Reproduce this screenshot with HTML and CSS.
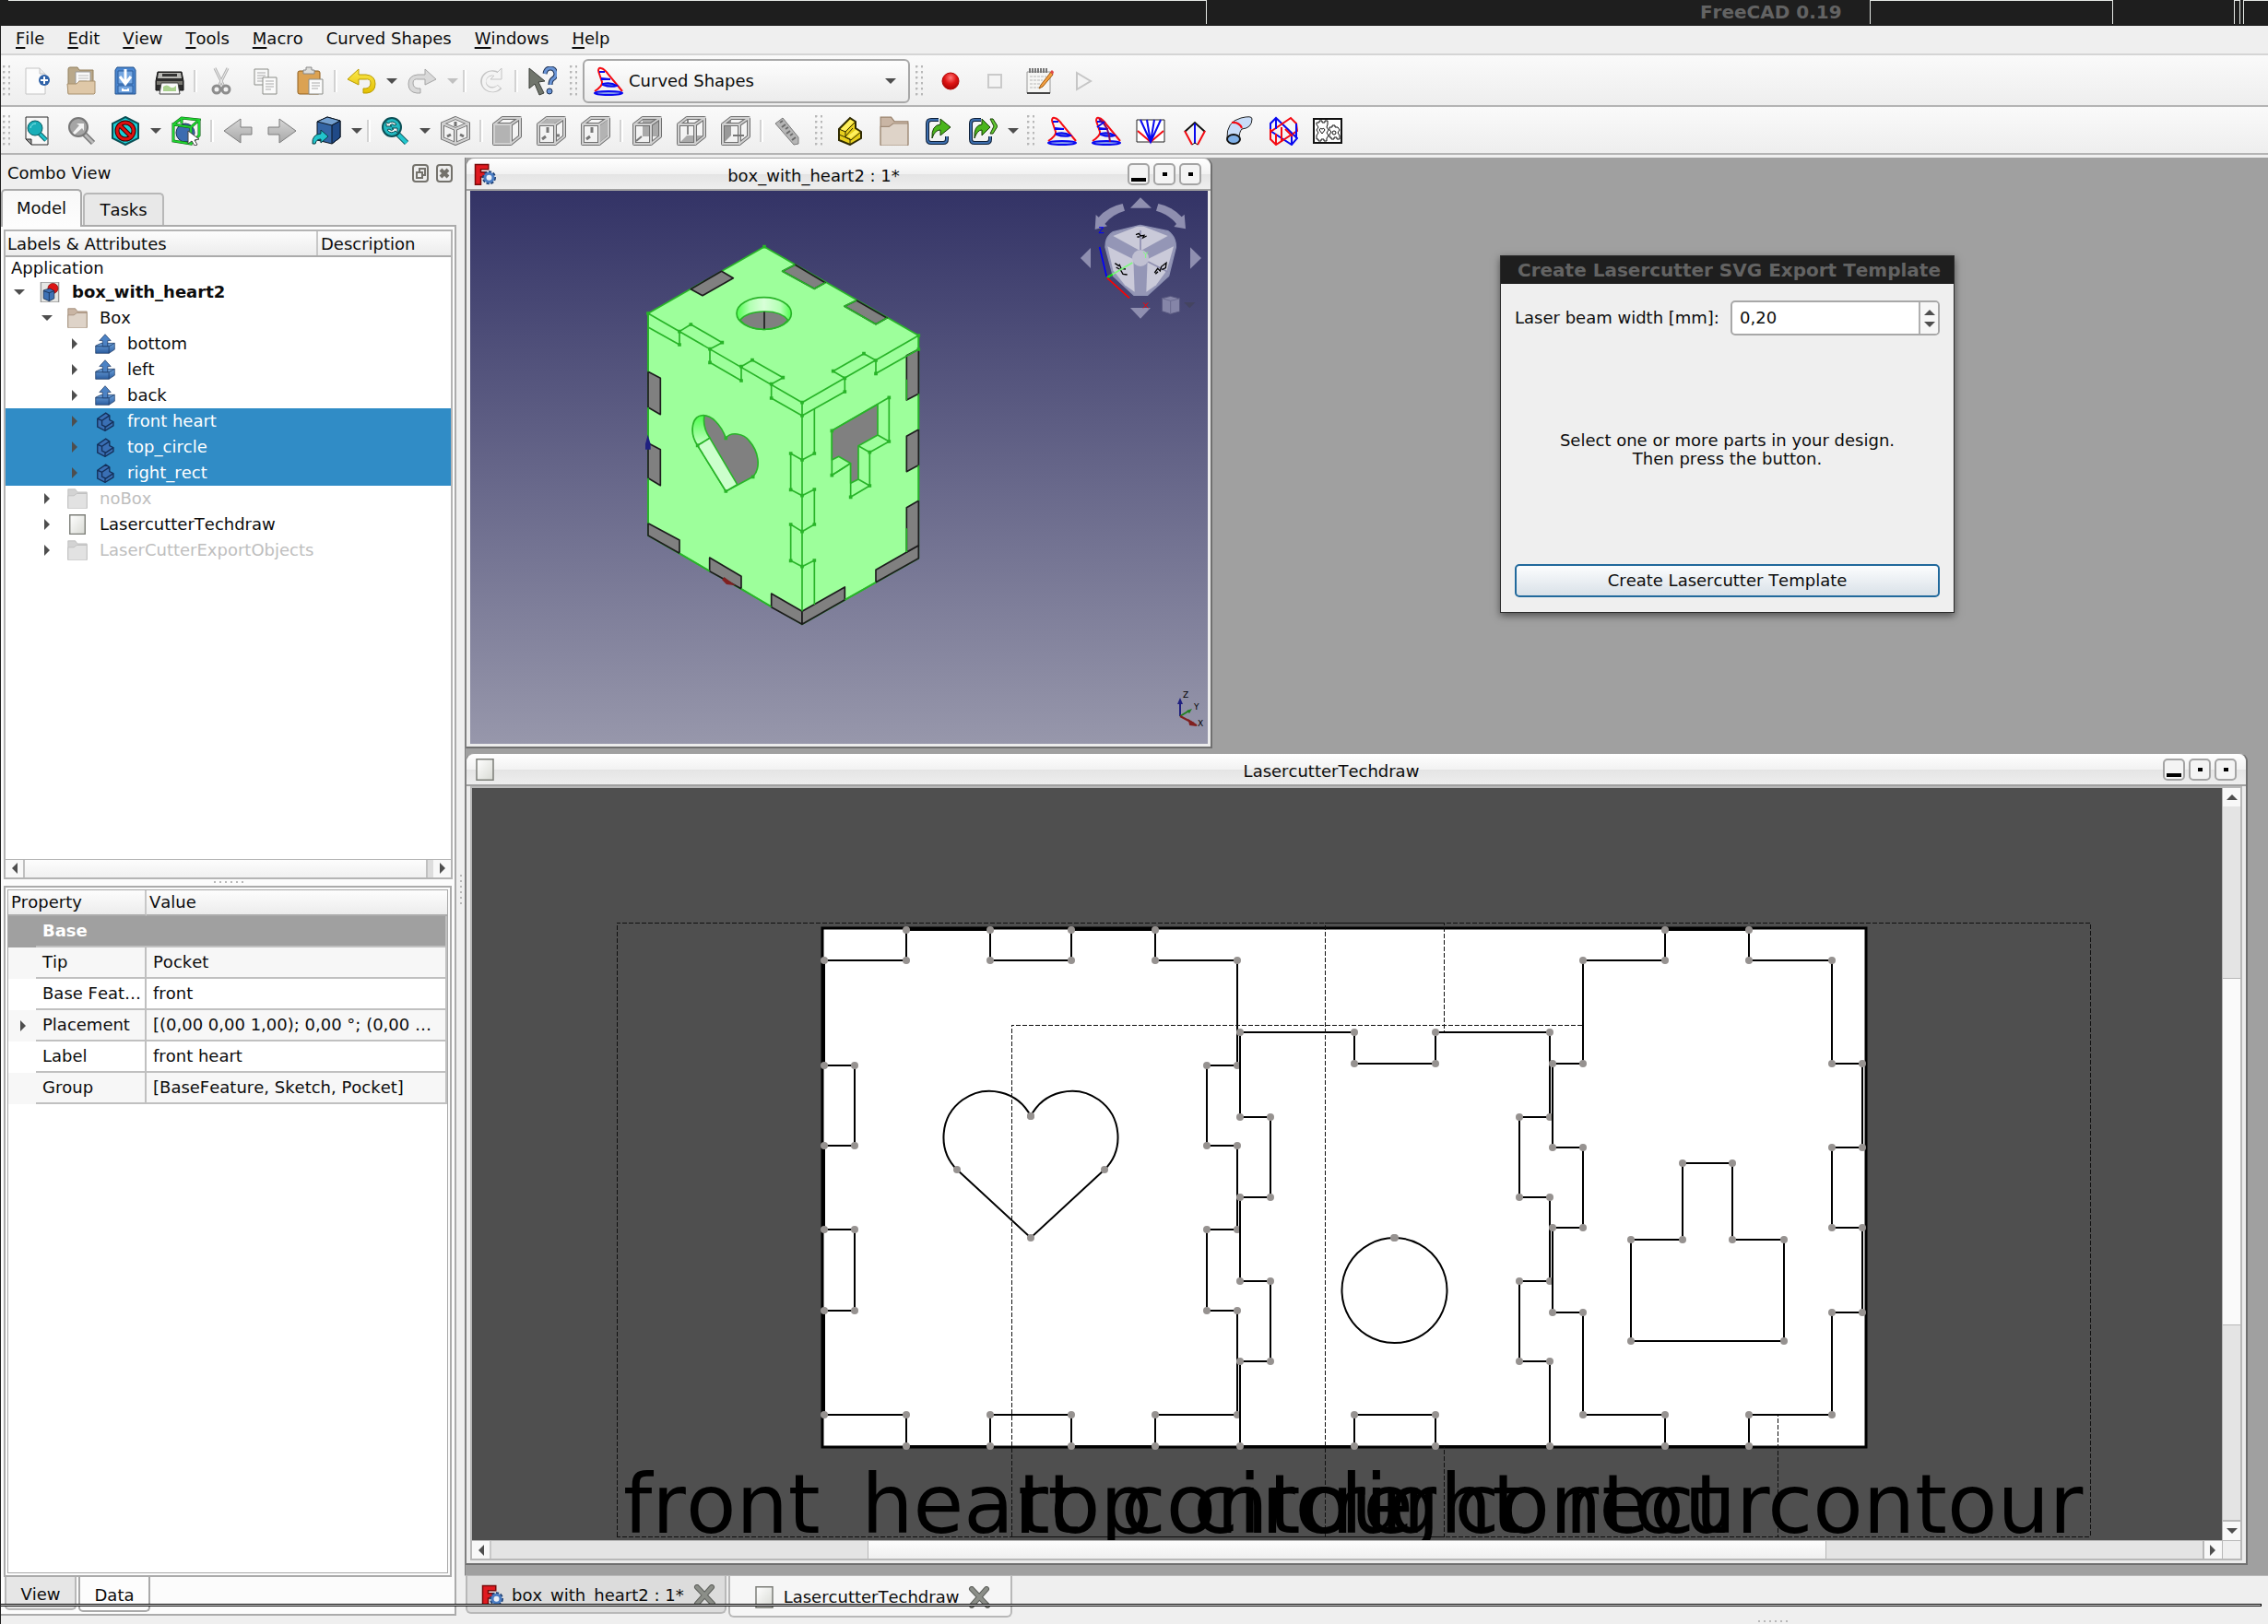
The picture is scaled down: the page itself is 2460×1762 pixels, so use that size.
FILE: index.html
```html
<!DOCTYPE html>
<html lang="en">
<head>
<meta charset="utf-8">
<title>FreeCAD 0.19</title>
<link rel="stylesheet" href="styles.css">
</head>
<body class="app">

<svg class="sprites" aria-hidden="true">
  <defs>
    <linearGradient id="paper" x1="0" y1="0" x2="1" y2="1"><stop offset="0" stop-color="#fff"/><stop offset="1" stop-color="#d8dad4"/></linearGradient>
    <linearGradient id="gold" x1="0" y1="0" x2="0" y2="1"><stop offset="0" stop-color="#fce94f"/><stop offset="1" stop-color="#e3c000"/></linearGradient>
    <linearGradient id="steel" x1="0" y1="0" x2="0" y2="1"><stop offset="0" stop-color="#6da2dc"/><stop offset="1" stop-color="#2b5c9e"/></linearGradient>
    <linearGradient id="sky" x1="0" y1="0" x2="0" y2="1"><stop offset="0" stop-color="#333366"/><stop offset="1" stop-color="#9797ab"/></linearGradient>
    <linearGradient id="silver" x1="0" y1="0" x2="0" y2="1"><stop offset="0" stop-color="#d6d6d6"/><stop offset="1" stop-color="#a8a8a8"/></linearGradient>
    <linearGradient id="bore"><stop offset="0" stop-color="#4dff4d"/><stop offset=".25" stop-color="#b4ffb4"/><stop offset=".5" stop-color="#d8ffd8"/><stop offset=".8" stop-color="#b4ffb4"/><stop offset="1" stop-color="#4dff4d"/></linearGradient>
    <linearGradient id="lobe" x1="0" y1="0" x2="0" y2="1"><stop offset="0" stop-color="#4dff4d"/><stop offset="1" stop-color="#c8ffc8"/></linearGradient>
    <radialGradient id="ruby" cx=".5" cy=".3" r=".7"><stop offset="0" stop-color="#ff7a7a"/><stop offset=".5" stop-color="#e01515"/><stop offset="1" stop-color="#a80000"/></radialGradient>
    <marker id="node" markerUnits="userSpaceOnUse" markerWidth="10" markerHeight="10" refX="5" refY="5"><circle cx="5" cy="5" r="4" fill="#969290"/></marker>
  </defs>

  <symbol id="i-new" viewBox="0 0 32 32"><path d="M4 2h15l6 6v22H4z" fill="#fcfcfc" stroke="#c4c4c4"/><path d="M19 2v6h6" fill="#eee" stroke="#c4c4c4"/><circle cx="24" cy="15" r="6" fill="#2f62a8"/><path d="M24 11v8M20 15h8" stroke="#fff" stroke-width="2"/></symbol>
  <symbol id="i-open" viewBox="0 0 32 32"><path d="M2 29V3q0-2 2-2h8l2 3h15v22H2" fill="#b9a88a" stroke="#94805f"/><path d="M10 6h16v16H10z" fill="#fafafa" stroke="#999"/><path d="M13 10h11M13 13h11M13 16h9" stroke="#bbb"/><path d="M2 30l-1-11h10l3-3h17v13l-1 1z" fill="#dfc8a8" stroke="#a8916e"/></symbol>
  <symbol id="i-save" viewBox="0 0 32 32"><path d="M7 1h18l2 3v26H5V4z" fill="#4a86d0" stroke="#20508c"/><path d="M8 5h16v14H8zM8 21h16v8H8z" fill="#73a5e0" stroke="#2a5c9c"/><path d="M16 3v14M10 11l6 8 6-8" fill="none" stroke="#fff" stroke-width="3"/><path d="M13 24v2h6v-2" fill="none" stroke="#fff" stroke-width="2"/></symbol>
  <symbol id="i-print" viewBox="0 0 32 32"><path d="M3 6h26l2 10v10H1V16z" fill="#2c2c2c" stroke="#111"/><path d="M4 7h24l1 6H3z" fill="#b9b9b5"/><path d="M8 8h16v3H8z" fill="#333"/><path d="M2 16h28v4H2z" fill="#77766f"/><path d="M7 18h18l2 12H5z" fill="#fafafa" stroke="#444"/><path d="M9 22q4-3 7 0t7-1v6H9z" fill="#a9d18e"/></symbol>
  <symbol id="i-cut" viewBox="0 0 32 32"><path d="M9 2l10 20M23 2L13 22" stroke="#b2b2b2" stroke-width="3"/><path d="M9 2l10 20M23 2L13 22" stroke="#f2f2f2"/><circle cx="11" cy="25" r="4" fill="none" stroke="#8d8d8d" stroke-width="3"/><circle cx="21" cy="25" r="4" fill="none" stroke="#8d8d8d" stroke-width="3"/></symbol>
  <symbol id="i-copy" viewBox="0 0 32 32"><path d="M4 3h15v17H4z" fill="#f8f8f8" stroke="#8a8c87"/><path d="M7 7h9M7 10h9M7 13h9M7 16h6" stroke="#aaa"/><path d="M13 12h15v18H13z" fill="#fafafa" stroke="#8a8c87"/><path d="M16 16h9M16 19h9M16 22h9M16 25h6" stroke="#aaa"/></symbol>
  <symbol id="i-paste" viewBox="0 0 32 32"><rect x="3" y="5" width="24" height="25" rx="2" fill="#dba253" stroke="#8f5f1f"/><path d="M9 8V4h3V1h6v3h3v4z" fill="#dededb" stroke="#888"/><path d="M15 14h15v16H15z" fill="#fbfbfb" stroke="#8a8c87"/><path d="M18 18h9M18 21h9M18 24h7" stroke="#aaa"/></symbol>
  <symbol id="i-undo" viewBox="0 0 32 32"><path d="M1 14L13 3v6h8q10 1 10 10t-9 10h-4v-5h3q5-1 5-6t-6-4h-7v6z" fill="url(#gold)" stroke="#b99b00"/></symbol>
  <symbol id="i-redo" viewBox="0 0 32 32"><path d="M31 14L19 3v6h-8Q1 10 1 19t9 10h4v-5h-3q-5-1-5-6t6-4h7v6z" fill="#d9d9d9" stroke="#a5a5a5"/></symbol>
  <symbol id="i-refresh" viewBox="0 0 32 32"><path d="M26 22a10 9 0 1 1-2-13" fill="none" stroke="#c4c4c4" stroke-width="6"/><path d="M28 2v12H16z" fill="#f4f4f4" stroke="#c4c4c4"/><path d="M25 22a9 9 0 1 1-1-12" fill="none" stroke="#f4f4f4" stroke-width="4"/></symbol>
  <symbol id="i-help" viewBox="0 0 32 32"><path d="M2 2l17 14-7 1 6 12-5 2-5-12-6 5z" fill="#70756c" stroke="#3c403a"/><path d="M19 8q1-6 6-6t6 6q0 4-4 6-2 2-2 6" fill="none" stroke="#1b2f52" stroke-width="5"/><path d="M19 8q1-6 6-6t6 6q0 4-4 6-2 2-2 6" fill="none" stroke="#6a95d6" stroke-width="3"/><circle cx="24" cy="27" r="3" fill="#6a95d6" stroke="#1b2f52"/></symbol>
  <symbol id="i-record" viewBox="0 0 32 32"><circle cx="16" cy="16" r="9" fill="url(#ruby)" stroke="#b00000"/></symbol>
  <symbol id="i-stop" viewBox="0 0 32 32"><path d="M9 9h14v14H9z" fill="#f4f4f4" stroke="#cacaca" stroke-width="2"/></symbol>
  <symbol id="i-macro" viewBox="0 0 32 32"><path d="M3 6h25v23H3z" fill="#f6f6f4" stroke="#999"/><path d="M3 28h25v2H3z" fill="#444"/><path d="M6 2v5M9 2v5M12 2v5M15 2v5M18 2v5M21 2v5M24 2v5" stroke="#777" stroke-width="2"/><path d="M6 11h18M6 15h14M6 19h12M6 23h10" stroke="#b8b8b8" stroke-dasharray="3 1"/><path d="M29 6L18 20l-2 4 4-2L31 9z" fill="#f5a040" stroke="#9b5a12"/><path d="M28 6l3 3 1-3-2-2z" fill="#e04848"/></symbol>
  <symbol id="i-play" viewBox="0 0 32 32"><path d="M9 7l15 9-15 9z" fill="#f4f4f4" stroke="#c6c6c6" stroke-width="2"/></symbol>

  <symbol id="i-fit" viewBox="0 0 32 32"><path d="M4 1h24v30H10l-6-6z" fill="#f8f8f8" stroke="#2a2a2a"/><path d="M4 25h6v6z" fill="#999" stroke="#2a2a2a"/><path d="M18 18l8 8" stroke="#0a5a60" stroke-width="5"/><path d="M18 18l8 8" stroke="#1fc3cc" stroke-width="3"/><circle cx="14" cy="13" r="8" fill="#18aeb8" stroke="#0a5a60"/><path d="M9 13q1-5 6-5" fill="none" stroke="#8de8ec"/></symbol>
  <symbol id="i-zoomsel" viewBox="0 0 32 32"><path d="M19 19l10 10" stroke="#777" stroke-width="6"/><path d="M19 19l10 10" stroke="#bbb" stroke-width="3"/><circle cx="13" cy="12" r="10" fill="#a5a5a5" stroke="#777" stroke-width="2"/><path d="M7 18l7-8-3-2h8v8l-2-3-8 7z" fill="#f3f3f3"/></symbol>
  <symbol id="i-style" viewBox="0 0 32 32"><path d="M16 1l14 7v16l-14 7-14-7V8z" fill="#19cfd6" stroke="#0a4f55" stroke-width="2"/><circle cx="16" cy="16" r="9" fill="none" stroke="#3a0000" stroke-width="5"/><path d="M10 10l12 12" stroke="#3a0000" stroke-width="5"/><circle cx="16" cy="16" r="9" fill="none" stroke="#dd1111" stroke-width="3"/><path d="M10 10l12 12" stroke="#dd1111" stroke-width="3"/></symbol>
  <symbol id="i-selbox" viewBox="0 0 32 32"><circle cx="15" cy="18" r="10" fill="#3d6cb0" stroke="#162f55"/><path d="M2 9l19 3v18L2 27zM2 9l9-7 19 2-9 8M30 4v17l-9 9M11 2v6" fill="none" stroke="#0a5c10" stroke-width="3"/><path d="M2 9l19 3v18L2 27zM2 9l9-7 19 2-9 8M30 4v17l-9 9M11 2v6" fill="none" stroke="#1fd330" stroke-width="2"/><path d="M18 16l12 9-5 1 3 5-3 1-3-5-4 3z" fill="#fff" stroke="#444"/></symbol>
  <symbol id="i-left" viewBox="0 0 32 32"><path d="M1 16L19 3v9h12v8H19v9z" fill="url(#silver)" stroke="#7d7d7d"/></symbol>
  <symbol id="i-right" viewBox="0 0 32 32"><path d="M31 16L13 3v9H1v8h12v9z" fill="url(#silver)" stroke="#7d7d7d"/></symbol>
  <symbol id="i-link" viewBox="0 0 32 32"><path d="M6 6l11-5 14 4v18l-9 7-16-4z" fill="#3465a4" stroke="#0b1521"/><path d="M6 6l11-5 14 4-9 5z" fill="#729fcf" stroke="#0b1521"/><path d="M22 10l9-5v18l-9 7z" fill="#204a87" stroke="#0b1521"/><path d="M1 30q-1-10 9-11v-4l8 7-8 7v-4q-5 0-6 5z" fill="#22c5cc" stroke="#083c40"/></symbol>
  <symbol id="i-zoom" viewBox="0 0 32 32"><path d="M19 19l10 10" stroke="#0a4f55" stroke-width="6"/><path d="M19 19l10 10" stroke="#22c5cc" stroke-width="4"/><circle cx="13" cy="12" r="10" fill="#22b8c0" stroke="#0a4f55" stroke-width="2"/><path d="M7 11V6l2 2q5-4 9 1l-2 1q-3-3-5 0l2 1zM19 13v5l-2-2q-5 4-9-1l2-1q3 3 5 0l-2-1z" fill="#f4f4f4" stroke="#0a4f55"/></symbol>
  <symbol id="i-iso" viewBox="0 0 32 32"><path d="M16 2l14 6v16l-14 6-14-6V8zM16 14v16M16 14L2 8M16 14l14-6" fill="none" stroke="#737373" stroke-width="4"/><path d="M16 2l14 6v16l-14 6-14-6V8zM16 14v16M16 14L2 8M16 14l14-6" fill="none" stroke="#d2d2d2" stroke-width="2"/><path d="M16 6v5M7 22l4-2M25 22l-4-2" stroke="#737373" stroke-width="3"/></symbol>
  <symbol id="wire" viewBox="0 0 32 32"><path d="M2 9h18v21H2zM2 9l9-7h19l-10 7M30 2v20l-10 8" fill="none" stroke="#707070" stroke-width="4" stroke-linejoin="round"/><path d="M2 9h18v21H2zM2 9l9-7h19l-10 7M30 2v20l-10 8" fill="none" stroke="#d0d0d0" stroke-width="2"/></symbol>
  <symbol id="ticks" viewBox="0 0 32 32"><path d="M12 12v6M6 25l4-3M18 21h7" stroke="#777" stroke-width="3"/></symbol>
  <symbol id="i-front" viewBox="0 0 32 32"><path d="M2 9h18v21H2z" fill="#b3b3b3"/><use href="#wire"/><path d="M3 10h16v19H3z" fill="#b3b3b3"/></symbol>
  <symbol id="i-top" viewBox="0 0 32 32"><use href="#ticks"/><use href="#wire"/><path d="M4 8l8-5h15l-8 5z" fill="#b3b3b3"/></symbol>
  <symbol id="i-rightv" viewBox="0 0 32 32"><use href="#ticks"/><use href="#wire"/><path d="M21 10l8-6v17l-8 7z" fill="#b3b3b3"/></symbol>
  <symbol id="i-rear" viewBox="0 0 32 32"><path d="M11 3h19v19H11z" fill="#aaa"/><use href="#wire"/><path d="M4 27l6-5" stroke="#777" stroke-width="2"/></symbol>
  <symbol id="i-bottom" viewBox="0 0 32 32"><path d="M2 30l9-9h19l-10 9z" fill="#aaa"/><path d="M12 4v16" stroke="#888" stroke-width="2"/><use href="#wire"/></symbol>
  <symbol id="i-leftv" viewBox="0 0 32 32"><path d="M2 9l9-7v19l-9 9z" fill="#999"/><use href="#wire"/><path d="M13 21h12" stroke="#777" stroke-width="2"/></symbol>
  <symbol id="i-ruler" viewBox="0 0 32 32"><path d="M3 8l8-6 17 21v7l-5 1z" fill="#b5b5b5" stroke="#7a7a7a"/><path d="M11 5l-3 2M14 9l-4 3M17 12l-3 2M19 16l-4 3M22 19l-3 2M25 23l-4 3" stroke="#6a6a6a" stroke-width="2"/></symbol>
  <symbol id="i-part" viewBox="0 0 32 32"><path d="M4 14l12-12 6 4v7l6 4v7L16 31 4 26z" fill="#e8cf1d" stroke="#302b00" stroke-width="2"/><path d="M4 14l7 3 11-11M11 17v6l6 3 11-9M16 25v6M4 20l12 5M11 22l8-9" fill="none" stroke="#302b00"/><path d="M6 14l5 2 9-10-4-2zM13 22l4 2 9-7-4-2z" fill="#fff05e"/></symbol>
  <symbol id="i-folder" viewBox="2 2 28 28"><path d="M3 3h10l3 4h13v22H3z" fill="#c9b5a4" stroke="#97806a"/><path d="M3 12h8l4-3h14v20q0 1-1 1H4q-1 0-1-1z" fill="#ded3c8" stroke="#a08b77"/></symbol>
  <symbol id="i-folder-off" viewBox="2 2 28 28"><path d="M3 3h10l3 4h13v22H3z" fill="#d3d3d3" stroke="#b9b9b9"/><path d="M3 12h8l4-3h14v20q0 1-1 1H4q-1 0-1-1z" fill="#e2e2e2" stroke="#bbb"/></symbol>
  <symbol id="i-export" viewBox="0 0 32 32"><path d="M16 4H8q-4 0-4 4v17q0 4 4 4h13q4 0 4-4v-3" fill="none" stroke="#0e2038" stroke-width="4"/><path d="M16 4H8q-4 0-4 4v17q0 4 4 4h13q4 0 4-4v-3" fill="none" stroke="#3e6fae" stroke-width="2"/><path d="M9 24q-1-14 9-15V3l11 9-11 9v-6q-6 0-9 9z" fill="#4ab51c" stroke="#173f04"/></symbol>
  <symbol id="i-export2" viewBox="0 0 32 32"><path d="M14 4H7Q3 4 3 8v17q0 4 4 4h13q4 0 4-4v-3" fill="none" stroke="#0e2038" stroke-width="4"/><path d="M14 4H7Q3 4 3 8v17q0 4 4 4h13q4 0 4-4v-3" fill="none" stroke="#3e6fae" stroke-width="2"/><path d="M7 24Q6 10 15 9V3l9 9-9 9v-6q-5 0-8 9z" fill="#4ab51c" stroke="#173f04"/><path d="M24 3h3l5 8-5 8h-3l4-8z" fill="#62c832" stroke="#173f04"/></symbol>
  <symbol id="i-sail" viewBox="0 0 32 32"><path d="M5 5q0-4 3-3 4 1 8 7l15 18M5 5l4 12q1 4-8 10" fill="none" stroke="#f40a12" stroke-width="2"/><path d="M6 5h6v2H6zM8 12l10 1v2H8z" fill="#0808f0"/><path d="M10 19q9-2 15 2-7 2-15-1z" fill="#5878d8" stroke="#0808f0" stroke-width="2"/><ellipse cx="16" cy="29" rx="15" ry="2" fill="#88a0e8" stroke="#0808f0" stroke-width="2"/></symbol>
  <symbol id="i-sail2" viewBox="0 0 32 32"><use href="#i-sail"/><path d="M8 3q11 8 12 25" fill="none" stroke="#7a0a6a" stroke-width="2"/><path d="M6 12l8-6" stroke="#0808f0" stroke-width="2"/></symbol>
  <symbol id="i-fan" viewBox="0 0 32 32"><path d="M1 4h30v24H1z" fill="#fff" stroke="#222"/><path d="M2 16l14 12 14-12" fill="none" stroke="#f40a12" stroke-width="2"/><path d="M5 4l11 24L27 4M12 4l4 24 4-24" fill="none" stroke="#0808f0" stroke-width="2"/></symbol>
  <symbol id="i-kite" viewBox="0 0 32 32"><path d="M5 17L16 7l11 10" fill="none" stroke="#111" stroke-width="2"/><path d="M5 16l8 15M27 16l-8 15" stroke="#f40a12" stroke-width="2"/><path d="M16 8v22" stroke="#0808f0" stroke-width="2"/><path d="M13 31l3-2 3 2" fill="none" stroke="#111"/></symbol>
  <symbol id="i-pipe" viewBox="0 0 32 32"><path d="M3 24Q2 6 18 2q12-3 12 1 0 10-11 11-3 3-3 11" fill="#c8dcf8" stroke="#222"/><path d="M8 7q8-1 11 6" fill="none" stroke="#f40a12" stroke-width="2"/><ellipse cx="10" cy="25" rx="7" ry="5" fill="#7fb0e8" stroke="#111" stroke-width="2"/></symbol>
  <symbol id="i-cross" viewBox="0 0 32 32"><path d="M2 8l6-6 23 22-6 7L2 16z" fill="none" stroke="#0808f0" stroke-width="2"/><path d="M30 8l-6-6L2 17v8l6 6L31 16zM14 12v16" fill="none" stroke="#f40a12" stroke-width="2"/><path d="M8 2v12M30 8v16M2 8v9M25 18v13" stroke="#0808f0" stroke-width="2"/><path d="M2 24V14M8 31V19M18 14l8 8" stroke="#f40a12" stroke-width="2"/></symbol>
  <symbol id="i-laser" viewBox="0 0 32 32"><path d="M1 3h30v26H1z" fill="#fff" stroke="#111" stroke-width="2"/><path d="M4 7h3V5h3v2h3V5h3v4l-1 3 2 3-2 3 2 3-2 3v3h-3v-2H9v2H6v-2H4v-4l2-3-2-3 2-3-2-3zM18 12h3v-2h3v2h3l2 3-2 3 2 3v4h-3v-2h-3v2h-3v-2h-2v-3l2-3-2-2z" fill="none" stroke="#111"/><path d="M10 19l-3-4q1-3 3-1 2-2 3 1z" fill="none" stroke="#111"/><circle cx="23" cy="18" r="2" fill="none" stroke="#111"/></symbol>

  <symbol id="i-doc" viewBox="0 0 32 32"><path d="M2 0h28v32H2z" fill="#e6e7e4" stroke="#9a9a9a" stroke-width="2"/><circle cx="21" cy="10" r="8" fill="#dc1414" stroke="#7a0000"/><path d="M6 13l10-3 7 4v12l-8 4-9-4z" fill="#3d71b5" stroke="#0b1f3c"/><path d="M6 14l9 3 8-3M15 17v13" fill="none" stroke="#0b1f3c"/></symbol>
  <symbol id="i-pad" viewBox="0 0 32 32"><path d="M1 19l9-4h21v10l-9 6H1z" fill="url(#steel)" stroke="#14305a"/><path d="M1 20h21l9-5M22 20v11" fill="none" stroke="#14305a"/><path d="M12 20v-9H7l9-10 9 10h-5v9z" fill="#4c82c4" stroke="#14305a"/></symbol>
  <symbol id="i-body" viewBox="0 0 32 32"><path d="M4 12L17 3l6 4v7l6 3v6l-13 8-12-6z" fill="#3a6fb4" stroke="#14305a" stroke-width="2"/><path d="M4 12l7 3 12-8M11 15v7l6 3 12-8M16 25v6" fill="none" stroke="#14305a" stroke-width="2"/></symbol>
  <symbol id="i-page" viewBox="0 0 32 32"><path d="M4 1h24v30H4z" fill="url(#paper)" stroke="#7c7e78" stroke-width="2"/></symbol>
  <symbol id="i-freecad" viewBox="0 0 32 32"><path d="M2 2h19v7H10v4h8v7h-8v11H2z" fill="#e01a20" stroke="#7a0a0a" stroke-width="2"/><circle cx="22" cy="21" r="8" fill="none" stroke="#1d3f73" stroke-width="4" stroke-dasharray="4 2"/><circle cx="22" cy="21" r="6" fill="#e9eef6" stroke="#4a7cc2" stroke-width="4"/></symbol>
  <symbol id="i-close" viewBox="0 0 24 24"><path d="M4 3l17 18M20 3L4 21" stroke="#5e605c" stroke-width="6" stroke-linecap="round"/><path d="M4 3l17 18M20 3L4 21" stroke="#8b8e88" stroke-width="4" stroke-linecap="round"/></symbol>
  <symbol id="a-down" viewBox="0 0 12 8"><path d="M0 1h12L6 7z" fill="#4e4e4e"/></symbol>
  <symbol id="a-up" viewBox="0 0 12 8"><path d="M0 7h12L6 1z" fill="#4e4e4e"/></symbol>
  <symbol id="a-right" viewBox="0 0 8 12"><path d="M1 0v12l6-6z" fill="#4e4e4e"/></symbol>
  <symbol id="a-left" viewBox="0 0 8 12"><path d="M7 0v12L1 6z" fill="#4e4e4e"/></symbol>
</svg>

<header class="titlebar">
  <span class="seg seg-a"></span>
  <span class="seg-gap"></span>
  <h1 class="app-title">FreeCAD 0.19</h1>
  <span class="seg seg-b"></span>
  <span class="seg-space"></span>
  <span class="seg seg-c"></span>
  <span class="seg seg-d"></span>
</header>

<nav class="menubar">
  <button class="menu"><u>F</u>ile</button><button class="menu"><u>E</u>dit</button><button class="menu"><u>V</u>iew</button><button class="menu"><u>T</u>ools</button><button class="menu"><u>M</u>acro</button><button class="menu">Curved Shapes</button><button class="menu"><u>W</u>indows</button><button class="menu"><u>H</u>elp</button>
</nav>

<div class="toolrow row-one">
  <span class="grip"></span>
  <button class="tool" aria-label="New"><svg class="ico"><use href="#i-new"/></svg></button>
  <button class="tool" aria-label="Open"><svg class="ico"><use href="#i-open"/></svg></button>
  <button class="tool" aria-label="Save"><svg class="ico"><use href="#i-save"/></svg></button>
  <button class="tool" aria-label="Print"><svg class="ico"><use href="#i-print"/></svg></button>
  <span class="sep"></span>
  <button class="tool" aria-label="Cut"><svg class="ico"><use href="#i-cut"/></svg></button>
  <button class="tool" aria-label="Copy"><svg class="ico"><use href="#i-copy"/></svg></button>
  <button class="tool" aria-label="Paste"><svg class="ico"><use href="#i-paste"/></svg></button>
  <span class="sep"></span>
  <button class="tool" aria-label="Undo"><svg class="ico"><use href="#i-undo"/></svg></button>
  <button class="drop" aria-label="Undo list"><svg class="arr"><use href="#a-down"/></svg></button>
  <button class="tool" aria-label="Redo"><svg class="ico"><use href="#i-redo"/></svg></button>
  <button class="drop off" aria-label="Redo list"><svg class="arr"><use href="#a-down"/></svg></button>
  <span class="sep"></span>
  <button class="tool" aria-label="Refresh"><svg class="ico"><use href="#i-refresh"/></svg></button>
  <span class="sep"></span>
  <button class="tool" aria-label="What's this"><svg class="ico"><use href="#i-help"/></svg></button>
  <span class="grip grip-mid"></span>
  <div class="combo">
    <svg class="combo-ico"><use href="#i-sail"/></svg>
    <select class="combo-select" aria-label="Workbench"><option>Curved Shapes</option></select>
    <svg class="combo-arr"><use href="#a-down"/></svg>
  </div>
  <span class="grip grip-mid"></span>
  <button class="tool" aria-label="Record macro"><svg class="ico"><use href="#i-record"/></svg></button>
  <button class="tool" aria-label="Stop macro"><svg class="ico"><use href="#i-stop"/></svg></button>
  <button class="tool" aria-label="Macros"><svg class="ico"><use href="#i-macro"/></svg></button>
  <button class="tool" aria-label="Run macro"><svg class="ico"><use href="#i-play"/></svg></button>
</div>

<div class="toolrow row-two">
  <span class="grip"></span>
  <button class="tool" aria-label="Fit all"><svg class="ico"><use href="#i-fit"/></svg></button>
  <button class="tool" aria-label="Fit selection"><svg class="ico"><use href="#i-zoomsel"/></svg></button>
  <button class="tool" aria-label="Draw style"><svg class="ico"><use href="#i-style"/></svg></button>
  <button class="drop" aria-label="Draw style list"><svg class="arr"><use href="#a-down"/></svg></button>
  <button class="tool" aria-label="Bounding box"><svg class="ico"><use href="#i-selbox"/></svg></button>
  <span class="sep"></span>
  <button class="tool" aria-label="Back"><svg class="ico"><use href="#i-left"/></svg></button>
  <button class="tool" aria-label="Forward"><svg class="ico"><use href="#i-right"/></svg></button>
  <button class="tool" aria-label="Go to linked object"><svg class="ico"><use href="#i-link"/></svg></button>
  <button class="drop" aria-label="Link list"><svg class="arr"><use href="#a-down"/></svg></button>
  <span class="sep"></span>
  <button class="tool" aria-label="Sync view"><svg class="ico"><use href="#i-zoom"/></svg></button>
  <button class="drop" aria-label="Sync list"><svg class="arr"><use href="#a-down"/></svg></button>
  <button class="tool" aria-label="Isometric"><svg class="ico"><use href="#i-iso"/></svg></button>
  <span class="sep"></span>
  <button class="tool" aria-label="Front"><svg class="ico"><use href="#i-front"/></svg></button>
  <button class="tool" aria-label="Top"><svg class="ico"><use href="#i-top"/></svg></button>
  <button class="tool" aria-label="Right"><svg class="ico"><use href="#i-rightv"/></svg></button>
  <span class="sep"></span>
  <button class="tool" aria-label="Rear"><svg class="ico"><use href="#i-rear"/></svg></button>
  <button class="tool" aria-label="Bottom"><svg class="ico"><use href="#i-bottom"/></svg></button>
  <button class="tool" aria-label="Left"><svg class="ico"><use href="#i-leftv"/></svg></button>
  <span class="sep"></span>
  <button class="tool" aria-label="Measure"><svg class="ico"><use href="#i-ruler"/></svg></button>
  <span class="grip grip-mid"></span>
  <button class="tool" aria-label="Create part"><svg class="ico"><use href="#i-part"/></svg></button>
  <button class="tool" aria-label="Create group"><svg class="ico"><use href="#i-folder"/></svg></button>
  <button class="tool" aria-label="Make link"><svg class="ico"><use href="#i-export"/></svg></button>
  <button class="tool" aria-label="Link actions"><svg class="ico"><use href="#i-export2"/></svg></button>
  <button class="drop" aria-label="Link actions list"><svg class="arr"><use href="#a-down"/></svg></button>
  <span class="grip grip-mid"></span>
  <button class="tool" aria-label="Curved array"><svg class="ico"><use href="#i-sail"/></svg></button>
  <button class="tool" aria-label="Curved path array"><svg class="ico"><use href="#i-sail2"/></svg></button>
  <button class="tool" aria-label="Curved segment"><svg class="ico"><use href="#i-fan"/></svg></button>
  <button class="tool" aria-label="Interpolated middle"><svg class="ico"><use href="#i-kite"/></svg></button>
  <button class="tool" aria-label="Notch connector"><svg class="ico"><use href="#i-pipe"/></svg></button>
  <button class="tool" aria-label="Surface cut"><svg class="ico"><use href="#i-cross"/></svg></button>
  <button class="tool" aria-label="Lasercutter export"><svg class="ico"><use href="#i-laser"/></svg></button>
</div>

<main class="workspace">
  <aside class="combo-view">
    <div class="dock-title">
      <h2 class="dock-name">Combo View</h2>
      <button class="dock-btn" aria-label="Float"><svg viewBox="0 0 18 20" class="dock-svg"><rect x="1" y="1" width="16" height="18" rx="3"/><path d="M5 9h6v6H5zM8 8V5h6v7h-2"/></svg></button>
      <button class="dock-btn" aria-label="Close"><svg viewBox="0 0 18 20" class="dock-svg"><rect x="1" y="1" width="16" height="18" rx="3"/><path d="M5 6l8 8M13 6l-8 8" stroke-width="4"/></svg></button>
    </div>
    <div class="tabs-top">
      <button class="tab-top active">Model</button><button class="tab-top">Tasks</button>
    </div>
    <div class="pane">
      <div class="tree-frame">
        <div class="col-head"><span class="th-a">Labels &amp; Attributes</span><span class="th-b">Description</span></div>
        <ul class="tree">
          <li class="node root">Application</li>
          <li class="node lv0"><svg class="tw-d"><use href="#a-down"/></svg><svg class="tico"><use href="#i-doc"/></svg><b>box_with_heart2</b></li>
          <li class="node lv1"><svg class="tw-d"><use href="#a-down"/></svg><svg class="tico"><use href="#i-folder"/></svg>Box</li>
          <li class="node lv2"><svg class="tw-r"><use href="#a-right"/></svg><svg class="tico"><use href="#i-pad"/></svg>bottom</li>
          <li class="node lv2"><svg class="tw-r"><use href="#a-right"/></svg><svg class="tico"><use href="#i-pad"/></svg>left</li>
          <li class="node lv2"><svg class="tw-r"><use href="#a-right"/></svg><svg class="tico"><use href="#i-pad"/></svg>back</li>
          <li class="node lv2 sel"><svg class="tw-r"><use href="#a-right"/></svg><svg class="tico"><use href="#i-body"/></svg>front heart</li>
          <li class="node lv2 sel"><svg class="tw-r"><use href="#a-right"/></svg><svg class="tico"><use href="#i-body"/></svg>top_circle</li>
          <li class="node lv2 sel"><svg class="tw-r"><use href="#a-right"/></svg><svg class="tico"><use href="#i-body"/></svg>right_rect</li>
          <li class="node lv1 dim"><svg class="tw-r"><use href="#a-right"/></svg><svg class="tico"><use href="#i-folder-off"/></svg>noBox</li>
          <li class="node lv1"><svg class="tw-r"><use href="#a-right"/></svg><svg class="tico"><use href="#i-page"/></svg>LasercutterTechdraw</li>
          <li class="node lv1 dim"><svg class="tw-r"><use href="#a-right"/></svg><svg class="tico"><use href="#i-folder-off"/></svg>LaserCutterExportObjects</li>
        </ul>
        <div class="hscroll">
          <button class="sb" aria-label="Scroll left"><svg class="sa-h"><use href="#a-left"/></svg></button>
          <span class="thumb-tree"></span>
          <button class="sb" aria-label="Scroll right"><svg class="sa-h"><use href="#a-right"/></svg></button>
        </div>
      </div>
      <div class="split-h"><span class="dots-h"></span></div>
      <div class="prop-outer">
        <div class="prop-frame">
          <table class="props">
            <colgroup><col class="c-tw"><col class="c-name"><col></colgroup>
            <thead><tr><th colspan="2">Property</th><th class="h-val">Value</th></tr></thead>
            <tbody>
              <tr class="group"><td></td><td colspan="2">Base</td></tr>
              <tr class="odd"><td></td><td>Tip</td><td>Pocket</td></tr>
              <tr><td></td><td>Base Feat…</td><td>front</td></tr>
              <tr class="odd"><td><svg class="tw-p"><use href="#a-right"/></svg></td><td>Placement</td><td>[(0,00 0,00 1,00); 0,00 °; (0,00 …</td></tr>
              <tr><td></td><td>Label</td><td>front heart</td></tr>
              <tr class="odd"><td></td><td>Group</td><td>[BaseFeature, Sketch, Pocket]</td></tr>
            </tbody>
          </table>
        </div>
      </div>
      <div class="tabs-bottom">
        <button class="tab-bottom">View</button><button class="tab-bottom active">Data</button>
      </div>
    </div>
  </aside>

  <div class="split-v"><span class="dots-v"></span></div>

  <section class="work">
    <div class="mdi">
      <article class="win win-3d">
        <header class="win-bar">
          <svg class="win-ico"><use href="#i-freecad"/></svg>
          <h3 class="win-title">box_with_heart2 : 1*</h3>
          <button class="wb min" aria-label="Minimize"></button><button class="wb" aria-label="Restore"></button><button class="wb" aria-label="Close"></button>
        </header>
        <div class="win-body">
          <svg class="canvas" viewBox="510 207 800 600" preserveAspectRatio="xMidYMid slice">
            <rect x="510" y="207" width="800" height="600" fill="url(#sky)"/>
            <g transform="translate(640 240) scale(.33333)" stroke-width="5" stroke-linejoin="round">
              <path d="M567 83L1069 372V1097L690 1312L189 1023V300Z" fill="#9dff9b" stroke="#28b428"/>
              <g fill="#808080" stroke="#1c1c1c">
                <path d="M428 163L328 221L366 242L466 185Z"/>
                <path d="M667 142L765 200L730 220L626 163Z"/><path d="M867 258L966 315L930 335L828 277Z"/>
                <path d="M189 490L229 511V629L189 606Z"/><path d="M189 722L229 743V860L189 836Z"/>
                <path d="M189 983L291 1038V1081L189 1023Z"/><path d="M389 1095L492 1156V1196L389 1139Z"/><path d="M590 1212L690 1270V1312L590 1256Z"/>
                <path d="M690 1270L829 1191V1232L690 1312Z"/><path d="M930 1135L1069 1055V1097L930 1175Z"/>
                <path d="M1030 437L1069 417V562L1030 582Z"/><path d="M1030 700L1069 678V794L1030 815Z"/><path d="M1030 932L1069 910V1055L1030 1077Z"/>
              </g>
              <g fill="none" stroke="#28b428">
                <path d="M667 142L626 163L730 220L765 200M867 258L828 277L930 335L966 315M1030 515V582M1030 1000V1077"/>
                <path d="M189 300L690 590L1069 372M690 590V1270"/>
                <path d="M189 345L291 402V359L328 336L430 395L390 416V460L492 519V473L528 452L628 509L590 530V576L690 633L829 555V511L791 488L891 431L930 453V496L1069 417"/>
                <path d="M730 612V756L690 777L653 756V874L690 893L730 873V987L690 1010L653 987V1105L690 1124L730 1104V1248"/>
                <path d="M1069 372V417M1069 562V678M1069 794V910M189 606V722M189 836V983M189 300V490"/>
                <path d="M291 1081L389 1139M492 1196L590 1256M829 1232L930 1175"/>
                <ellipse cx="566" cy="300" rx="89" ry="52" fill="url(#bore)"/>
                <path d="M488 322Q510 295 566 294T644 322Q620 352 566 352T488 322Z" fill="#808080"/>
                <path d="M567 295V350" stroke="#1c1c1c"/>
                <path d="M442 706C425 660 395 632 368 632C330 640 326 690 350 730L442 879L530 832C560 800 545 745 518 715C500 690 458 684 442 706Z" fill="#808080"/>
                <path d="M372 633C330 625 322 690 350 730L390 706C372 680 368 655 372 633Z" fill="url(#lobe)"/>
                <path d="M350 730L390 706L479 857L442 879Z" fill="#ccffcc"/>
                <path d="M787 682L973 574V717L910 752V861L848 898V788L787 827Z"/>
                <path d="M787 682L936 596V696L873 731V840L848 853V788L809 766L787 777Z" fill="#808080"/>
                <path d="M936 696L973 717M873 731L910 752M873 840L910 861M848 788L787 827"/>
              </g>
              <path d="M567 83h0M189 300h0M1069 372h0M690 590h0M690 633h0M291 359h0M328 336h0M430 395h0M390 416h0M492 473h0M528 452h0M628 509h0M590 530h0M829 511h0M791 488h0M891 431h0M930 453h0M690 777h0M690 893h0M690 1010h0M690 1124h0M653 756h0M653 874h0M730 756h0M730 873h0M730 987h0M653 987h0M653 1105h0M730 1104h0M787 682h0M973 574h0M973 717h0M910 752h0M910 861h0M848 898h0M787 827h0M442 879h0M442 706h0M530 832h0M350 730h0M291 402h0M390 460h0M492 519h0M590 576h0M829 555h0M930 496h0M1069 417h0" stroke="#28b428" stroke-width="11" stroke-linecap="square"/>
              <path d="M188 695l9 30v18h-17v-18z" fill="#202080"/><path d="M430 1168l6-10 38 28-30-4z" fill="#802020"/>
            </g>
            <g transform="translate(1120 160) scale(.33333)">
              <g fill="#8f8fb0">
                <path d="M318 197l33-34 36 34zM318 522h66l-33 35zM156 360l33-33v66zM513 325l36 35-36 35z"/>
                <path d="M293 183l7 23q-42 12-65 43l8 7-40 11 3-48 9 8q30-34 78-44zM409 183l-7 23q42 12 66 43l-8 9 38 7-4-47-9 8q-30-34-76-43z"/>
              </g>
              <path d="M350 253L440 272Q467 290 466 325L443 418L374 481H330L262 418L237 325Q236 290 262 275Z" fill="#9496b6" stroke="#8f93b4" stroke-width="4"/>
              <g fill="#cacad9"><path d="M262 288L340 257H362L440 288L358 333H344Z"/><path d="M244 322L328 364L332 470L300 448L262 400Z"/><path d="M459 322L374 364L370 470L402 448L437 400Z"/><circle cx="351" cy="360" r="27" fill="#c0c0d2"/></g>
              <path d="M351 270V334M376 372L440 405" stroke="#8f8fb0" stroke-width="5"/>
              <path d="M336 284l10-4 5 8 12-2-4 8 12-6M340 291h8M268 377l12 8 3-3 5 12 15 2M272 390l14 8 8 14 14 2M397 408l10-14 8 8 4-14 16-12-2 16-12 6M400 412l8-8" fill="none" stroke="#000" stroke-width="4"/>
              <path d="M241 421L218 324" stroke="#00f" stroke-width="5"/><path d="M243 423L325 375" stroke="#7dfa7d" stroke-width="5"/><path d="M243 423L260 413" stroke="#00e000" stroke-width="5"/><path d="M243 425L315 490" stroke="#f00" stroke-width="5"/>
              <path d="M216 260h14l-14 18h16" fill="none" stroke="#00f" stroke-width="3"/><path d="M360 340l8 8 7-8M368 348v12" fill="none" stroke="#7dfa7d" stroke-width="3"/><path d="M360 505l16 18M376 505l-16 18" stroke="#f00" stroke-width="3"/>
              <path d="M421 491l28-7 30 8v42l-30 8-28-9z" fill="#8585a8" stroke="#55557c" stroke-width="3"/><path d="M421 491l28 8 30-7M449 499v43" fill="none" stroke="#6a6a90" stroke-width="3"/>
              <path d="M492 504h37l-18 19z" fill="#444460"/>
            </g>
            <g stroke-width="2" fill="none"><path d="M1280 777v-16" stroke="#202080"/><path d="M1277 764l3-7 3 7z" fill="#202080"/><path d="M1280 777l10-6" stroke="#208020"/><path d="M1287 771l6-2-3 5z" fill="#208020"/><path d="M1280 777l15 8" stroke="#802020"/><path d="M1290 782l8 5-7-1z" fill="#802020" stroke="#802020"/></g>
            <g class="axis"><text x="1283" y="757">Z</text><text x="1295" y="770">Y</text><text x="1299" y="788">X</text></g>
          </svg>
        </div>
      </article>

      <article class="win win-draw">
        <header class="win-bar">
          <svg class="win-ico"><use href="#i-page"/></svg>
          <h3 class="win-title">LasercutterTechdraw</h3>
          <button class="wb min" aria-label="Minimize"></button><button class="wb" aria-label="Restore"></button><button class="wb" aria-label="Close"></button>
        </header>
        <div class="win-body">
          <div class="scroll-area">
            <svg class="canvas" viewBox="512 855 1898 816" preserveAspectRatio="xMidYMid slice">
              <rect x="892" y="1007" width="1132" height="563" fill="#fff" stroke="#000" stroke-width="3"/>
              <path class="view-frame" d="M669 1667V1001H1566V1667Z"/>
              <path class="part" d="M894 1042H983V1009H1074V1042H1162V1009H1253V1042H1342V1156H1309V1243H1342V1334H1309V1422H1342V1535H1253V1569H1162V1535H1074V1569H983V1535H894V1422H927V1334H894V1243H927V1156H894Z"/>
              <path class="part" d="M1118 1211A50 50 0 1 0 1038 1269L1118 1343L1198 1269A50 50 0 1 0 1118 1211Z"/>
              <path class="view-frame" d="M1097 1667V1112H1928V1667Z"/>
              <path class="part" d="M1345 1120H1469V1154H1557V1120H1681V1212H1648V1299H1681V1390H1648V1477H1681V1569H1557V1535H1469V1569H1345V1477H1378V1390H1345V1299H1378V1212H1345Z"/>
              <path class="part" d="M1513 1343A57 57 0 1 1 1512 1343Z"/>
              <path class="view-frame" d="M1437 1667V1001H2267V1667Z"/>
              <path class="part" d="M1717 1042H1806V1009H1897V1042H1987V1154H2020V1245H1987V1332H2020V1424H1987V1535H1897V1569H1806V1535H1717V1424H1684V1332H1717V1245H1684V1154H1717Z"/>
              <path class="part" d="M1825 1262H1879V1345H1935V1455H1769V1345H1825Z"/>
              <g class="view-label"><text x="676" y="1663">front_heart_contour</text><text x="1104" y="1663">top_circle_contour</text><text x="1444" y="1663">right_rect_contour</text></g>
            </svg>
            <div class="vbar">
              <button class="sbv" aria-label="Scroll up"><svg class="sa-v"><use href="#a-up"/></svg></button>
              <span class="v-before"></span><span class="v-thumb"></span><span class="v-after"></span>
              <button class="sbv" aria-label="Scroll down"><svg class="sa-v"><use href="#a-down"/></svg></button>
            </div>
            <div class="hbar">
              <button class="sb" aria-label="Scroll left"><svg class="sa-h"><use href="#a-left"/></svg></button>
              <span class="h-before"></span><span class="h-thumb"></span><span class="h-after"></span>
              <button class="sb" aria-label="Scroll right"><svg class="sa-h"><use href="#a-right"/></svg></button>
            </div>
            <span class="corner"></span>
          </div>
        </div>
      </article>

      <form class="dialog">
        <h2 class="dlg-title">Create Lasercutter SVG Export Template</h2>
        <div class="dlg-body">
          <div class="dlg-row">
            <label for="beam">Laser beam width [mm]:</label>
            <div class="spin"><input id="beam" class="spin-in" type="text" inputmode="decimal" value="0,20"><span class="spin-btns"><svg class="sa-v"><use href="#a-up"/></svg><svg class="sa-v"><use href="#a-down"/></svg></span></div>
          </div>
          <p class="dlg-msg">Select one or more parts in your design.<br>Then press the button.</p>
          <button type="button" class="dlg-btn">Create Lasercutter Template</button>
        </div>
      </form>
    </div>
    <div class="doc-tabs">
      <div class="doc-tab"><svg class="dt-ico"><use href="#i-freecad"/></svg><span>box_with_heart2 : 1*</span><button class="dt-close" aria-label="Close tab"><svg class="dt-x"><use href="#i-close"/></svg></button></div>
      <div class="doc-tab active"><svg class="dt-ico"><use href="#i-page"/></svg><span>LasercutterTechdraw</span><button class="dt-close" aria-label="Close tab"><svg class="dt-x"><use href="#i-close"/></svg></button></div>
      <span class="dots-h dots-status"></span>
    </div>
  </section>
</main>
<div class="frame-line"></div>
</body>
</html>
```

FILE: styles.css
```css
* { box-sizing: border-box; }

.app {
  margin: 0;
  height: 100vh;
  display: flex;
  flex-direction: column;
  position: relative;
  overflow: hidden;
  border-left: 1px solid #1e1e1e;
  background: #efefef;
  color: #0c0c0c;
  font-family: "DejaVu Sans", sans-serif;
  font-size: 18px;
  line-height: 20px;
  font-kerning: none;
}
button, select, input { font: inherit; font-kerning: none; color: inherit; margin: 0; padding: 0; border: 0; background: none; }
h1, h2, h3, p, ul { margin: 0; padding: 0; font-size: 18px; font-weight: normal; }
svg { display: block; flex: none; }
.sprites { position: absolute; width: 0; height: 0; }

/* window title */
.titlebar { display: flex; height: 28px; flex: none; background: #1e1e1e; padding-bottom: 2px; }
.seg { border-top: 1px solid #e4e8e4; border-right: 1px solid #e4e8e4; }
.seg-a { flex: 1301; margin-left: 8px; }
.seg-gap { flex: 536; }
.app-title { flex: 184; min-width: 0; font-size: 20px; line-height: 26px; font-weight: bold; color: #636363; white-space: nowrap; }
.seg-b { flex: 263; border-left: 1px solid #e4e8e4; }
.seg-space { flex: 131; }
.seg-c { width: 7px; border-left: 1px solid #e4e8e4; }
.seg-d { width: 27px; border-left: 1px solid #e4e8e4; margin-left: 3px; border-right: 0; }

/* menu */
.menubar { display: flex; height: 32px; flex: none; border-bottom: 2px solid #d5d5d5; }
.menu { padding: 0 9px 2px 16px; }
.menu u { text-decoration-thickness: 2px; text-underline-offset: 3px; }

/* tool bars */
.toolrow { display: flex; align-items: center; flex: none; padding-top: 2px; border-bottom: 2px solid #b4b4b4; background: linear-gradient(#fafafa, #eeeeee); }
.row-one { height: 56px; }
.row-two { height: 52px; }
.grip { width: 8px; height: 34px; margin: 0 5px 0 2px; background: radial-gradient(circle at 1px 1px, #b8b8b8 1px, transparent 2px) 0 0 / 6px 6px; }
.grip-mid { margin: 0 6px; }
.tool { width: 48px; height: 48px; display: flex; align-items: center; justify-content: center; }
.ico { width: 32px; height: 32px; }
.drop { width: 18px; height: 48px; display: flex; align-items: center; justify-content: center; }
.arr { width: 12px; height: 8px; }
.off { opacity: .3; }
.sep { width: 4px; height: 24px; margin: 0 2px; background: #fff; border-left: 2px solid #d2d2d2; }
.combo { width: 355px; height: 48px; display: grid; grid-template-columns: 50px 1fr 38px; align-items: center; border: 2px solid #a8a8a8; border-radius: 6px; background: linear-gradient(#fdfdfd, #ececec); }
.combo-select { grid-area: 1 / 1 / 2 / 4; height: 44px; padding-left: 48px; appearance: none; }
.combo-ico { grid-area: 1 / 1; width: 32px; height: 32px; margin-left: 10px; }
.combo-arr { grid-area: 1 / 3; width: 12px; height: 8px; justify-self: center; }

/* docks */
.workspace { flex: 1; min-height: 0; display: flex; }
.combo-view { width: 494px; flex: none; display: flex; flex-direction: column; padding-bottom: 9px; }
.dock-title { height: 37px; display: flex; align-items: center; gap: 8px; padding: 2px 4px 0 7px; }
.dock-name { flex: 1; }
.dock-btn { width: 18px; height: 20px; }
.dock-svg { width: 18px; height: 20px; fill: none; stroke: #74726c; stroke-width: 2; }
.tabs-top { display: flex; align-items: flex-end; height: 39px; gap: 1px; }
.tab-top { width: 88px; height: 35px; border: 2px solid #b8b8b8; border-bottom: 0; border-radius: 5px 5px 0 0; background: #e8e8e8; }
.tab-top.active { height: 41px; align-self: flex-start; z-index: 1; padding-bottom: 2px; background: linear-gradient(#f8f8f8, #fdfdfd); border-color: #aaa; }
.pane { flex: 1; min-height: 0; display: flex; flex-direction: column; padding: 3px 2px 0 3px; border: 2px solid #ababab; border-left: 0; background: #fcfcfc; }
.tree-frame { flex: 706; min-height: 0; display: flex; flex-direction: column; border: 2px solid #b4b4b4; background: #fff; }
.col-head { display: flex; height: 28px; flex: none; line-height: 28px; background: linear-gradient(#fdfdfd, #ececec); border-bottom: 2px solid #ababab; }
.th-a { width: 339px; padding-left: 2px; border-right: 2px solid #c8c8c8; }
.th-b { padding-left: 3px; }
.tree { flex: 1; list-style: none; }
.node { display: flex; align-items: center; height: 28px; white-space: nowrap; }
.root { height: 24px; padding-left: 6px; }
.lv0 { padding-left: 9px; }
.lv1 { padding-left: 39px; }
.lv2 { padding-left: 69px; }
.tico { width: 24px; height: 22px; margin-right: 12px; }
.tw-d { width: 12px; height: 8px; margin-right: 15px; }
.tw-r { width: 8px; height: 12px; margin: 0 17px 0 2px; }
.sel { background: #308cc6; color: #fff; }
.dim { color: #bebebe; }
.hscroll { display: flex; height: 20px; flex: none; border-top: 1px solid #b4b4b4; background: #ddd; }
.thumb-tree { flex: 1; margin-right: 6px; border: 2px solid #c0c0c0; border-width: 0 2px; background: linear-gradient(#fdfdfd, #f0f0f0); }
.sb { width: 19px; display: flex; align-items: center; justify-content: center; background: #f8f8f8; }
.sa-h { width: 8px; height: 12px; }
.sa-v { width: 12px; height: 8px; }
.split-h { height: 7px; flex: none; display: flex; align-items: center; justify-content: center; }
.dots-h { width: 32px; height: 2px; background: repeating-linear-gradient(90deg, #b8b8b8 0 2px, transparent 2px 6px); }
.prop-outer { flex: 748; min-height: 0; display: flex; margin-right: 1px; padding: 2px; border: 2px solid #ababab; }
.prop-frame { flex: 1; border: 1px solid #a8a8a8; background: #fff; }
.props { width: 100%; table-layout: fixed; border-collapse: separate; border-spacing: 0; text-align: left; }
.c-tw { width: 30px; }
.c-name { width: 120px; }
.props th { height: 28px; padding: 0 0 0 3px; font-weight: normal; background: linear-gradient(#fdfdfd, #ececec); border-bottom: 2px solid #ababab; border-right: 2px solid #c8c8c8; }
.props .h-val { border-right: 0; }
.props td { height: 34px; padding: 0 0 0 7px; white-space: nowrap; border-bottom: 2px solid #c0c0c0; border-right: 2px solid #c0c0c0; }
.props td:first-child { border: 0; padding: 0; }
.odd td { background: #f7f7f7; }
.group td { background: #a0a0a0; color: #fff; font-weight: bold; }
.tw-p { width: 8px; height: 12px; margin-left: 12px; }
.tabs-bottom { display: flex; height: 40px; flex: none; gap: 2px; padding-left: 1px; }
.tab-bottom { width: 78px; height: 36px; padding-top: 4px; border: 2px solid #b8b8b8; border-top: 0; border-radius: 0 0 5px 5px; background: #e6e6e6; }
.tab-bottom.active { height: 38px; background: #fdfdfd; border-color: #aaa; }
.split-v { width: 9px; flex: none; display: flex; align-items: center; justify-content: center; }
.dots-v { width: 2px; height: 32px; background: repeating-linear-gradient(#b8b8b8 0 2px, transparent 2px 6px); }

/* document area */
.work { flex: 1; min-width: 0; display: flex; flex-direction: column; padding-top: 3px; }
.mdi { flex: 1; min-height: 0; position: relative; background: #a0a0a0; border-left: 1px solid #808080; }
.win { position: absolute; display: flex; flex-direction: column; border: 1px solid; border-width: 1px 2px 2px 1px; border-color: #a0a0a0 #707070 #707070 #808080; border-radius: 9px 9px 0 0; background: #ececec; }
.win-3d { left: 0; top: 0; width: 810px; height: 641px; }
.win-draw { left: 0; top: 646px; right: 22px; bottom: 11px; }
.win-bar { display: flex; align-items: center; gap: 4px; height: 35px; flex: none; padding: 0 10px 0 8px; border-bottom: 2px solid #a0a0a0; border-radius: 9px 9px 0 0; background: linear-gradient(#fff, #f2f2f2 50%, #e4e4e4 51%, #eee); }
.win-ico { width: 24px; height: 24px; }
.win-title { flex: 1; text-align: center; padding: 4px 0 0 4px; }
.wb { width: 24px; height: 24px; display: grid; place-items: center; border: 2px solid #a4a4a4; border-radius: 5px; background: #f4f4f4; }
.wb::before { content: ""; width: 5px; height: 4px; background: #000; }
.min::before { width: 16px; height: 4px; align-self: end; margin-bottom: 2px; }
.win-body { flex: 1; min-height: 0; display: flex; padding: 0 3px 3px 4px; }
.win-draw .win-body { padding-right: 4px; }
.canvas { width: 100%; height: 100%; min-width: 0; min-height: 0; }
.axis { font-size: 9px; }
.scroll-area { flex: 1; min-width: 0; display: grid; grid-template: minmax(0, 1fr) 20px / minmax(0, 1fr) 20px; border: 2px solid #b8b8b8; background: #4f4f4f; }
.part { fill: #fff; stroke: #000; stroke-width: 2px; marker-mid: url(#node); marker-start: url(#node); }
.view-frame { fill: none; stroke: #111; stroke-width: 1px; stroke-dasharray: 5px 2px; shape-rendering: crispEdges; }
.view-label { font-size: 89px; }
.vbar { display: flex; flex-direction: column; background: #e4e4e4; border-left: 1px solid #b8b8b8; }
.hbar { display: flex; background: #e4e4e4; border-top: 1px solid #b8b8b8; }
.sbv { height: 20px; display: flex; align-items: center; justify-content: center; background: #f8f8f8; }
.v-before { flex: 187; }
.v-thumb { flex: 377; background: #fafafa; border: 1px solid #b8b8b8; border-width: 1px 0; }
.v-after { flex: 212; border-bottom: 2px solid #b8b8b8; }
.h-before { flex: 410; border-left: 2px solid #c8c8c8; }
.h-thumb { flex: 1041; background: linear-gradient(#fdfdfd, #f0f0f0); border: 1px solid #b8b8b8; border-width: 0 1px; }
.h-after { flex: 410; border-right: 2px solid #b8b8b8; }
.corner { background: #efefef; border: 1px solid #b8b8b8; border-width: 1px 0 0 1px; }

/* dialog */
.dialog { position: absolute; left: 1122px; top: 106px; width: 493px; height: 388px; display: flex; flex-direction: column; background: #efefef; border: 1px solid #2c2c2c; box-shadow: 0 3px 8px rgba(0, 0, 0, .5); }
.dlg-title { height: 30px; flex: none; font-size: 20px; line-height: 30px; padding-left: 4px; background: #1e1e1e; color: #636363; font-weight: bold; text-align: center; white-space: nowrap; }
.dlg-body { flex: 1; display: flex; flex-direction: column; padding: 18px 15px 16px; }
.dlg-row { display: flex; align-items: center; justify-content: space-between; gap: 12px; white-space: nowrap; }
.spin { width: 227px; height: 38px; display: flex; border: 2px solid #a8a8a8; border-radius: 5px; background: #fff; overflow: hidden; }
.spin-in { flex: 1; min-width: 0; padding-left: 8px; }
.spin-btns { width: 21px; display: flex; flex-direction: column; align-items: center; justify-content: center; gap: 5px; border-left: 2px solid #b0b0b0; background: #f6f6f6; }
.dlg-msg { flex: 1; display: grid; place-content: center; text-align: center; }
.dlg-btn { height: 36px; border: 2px solid #21699c; border-radius: 5px; background: linear-gradient(#fcfdfe, #d9e1e8); }

/* document tabs */
.doc-tabs { height: 53px; flex: none; display: flex; align-items: flex-start; gap: 2px; padding-left: 1px; border-top: 1px solid #b8b8b8; }
.doc-tab { display: flex; align-items: center; height: 41px; padding: 2px 8px 0 15px; border: 2px solid #b8b8b8; border-top: 0; border-radius: 0 0 6px 6px; background: #dcdcdc; }
.doc-tab.active { height: 45px; padding: 2px 20px 0 25px; background: #f6f6f6; }
.dt-ico { width: 24px; height: 24px; margin-right: 9px; }
.dt-close { width: 28px; height: 24px; margin-left: 8px; display: flex; justify-content: center; }
.dt-x { width: 24px; height: 24px; }
.dots-status { align-self: flex-end; margin: 0 521px 2px auto; }
.frame-line { position: absolute; left: 0; right: 7px; bottom: 19px; height: 3px; border: 1px solid #000; border-left: 0; background: #f4f4f4; }
```
